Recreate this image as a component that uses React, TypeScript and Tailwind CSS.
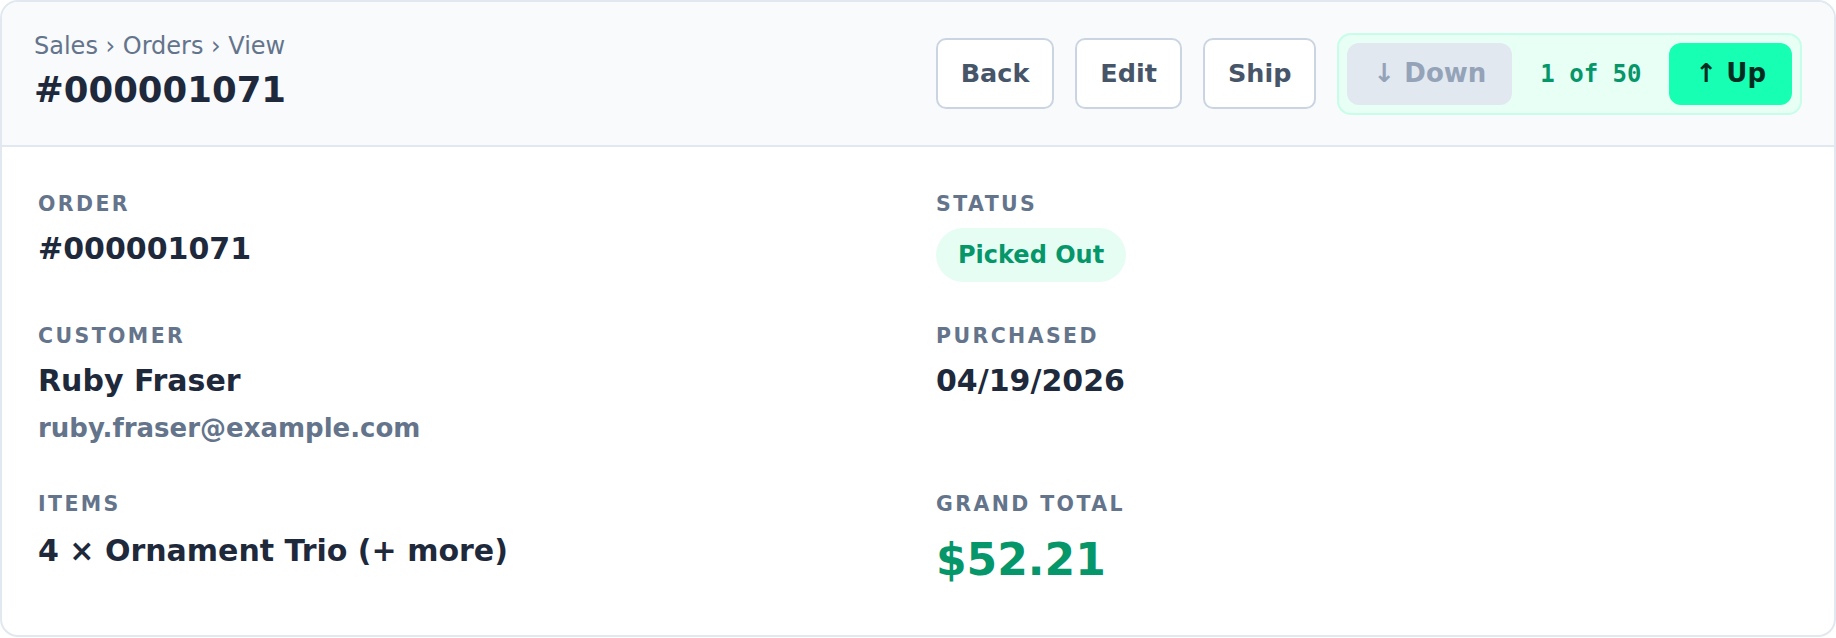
const sans = "font-['DejaVu_Sans',sans-serif]";

const Label = ({ children }: { children: string }) => (
  <div className="text-[20.5px] leading-[22px] font-bold uppercase tracking-[2.4px] text-[#64748b]">
    {children}
  </div>
);

const App = () => {
  return (
    <div className={`${sans} bg-white`}>
      <div className="h-[637px] rounded-[18px] border-2 border-[#e2e8f0] bg-white overflow-hidden">
        {/* header */}
        <header className="flex h-[145px] items-center justify-between border-b-2 border-[#e2e8f0] bg-[#f8fafc] px-[32px]">
          <div className="flex flex-col gap-[14px] pb-[6px]">
            <div className="text-[24px] leading-none text-[#64748b]">
              Sales › Orders › View
            </div>
            <h1 className="text-[35.5px] leading-none font-bold text-[#1e293b]">
              #000001071
            </h1>
          </div>

          <div className="flex items-center gap-[21px]">
            <button className="h-[71px] rounded-[10px] border-2 border-[#cbd5e1] bg-white px-[23px] text-[25.5px] font-bold text-[#475569]">
              Back
            </button>
            <button className="h-[71px] rounded-[10px] border-2 border-[#cbd5e1] bg-white px-[23px] text-[25.5px] font-bold text-[#475569]">
              Edit
            </button>
            <button className="h-[71px] rounded-[10px] border-2 border-[#cbd5e1] bg-white px-[23px] text-[25.5px] font-bold text-[#475569]">
              Ship
            </button>

            <div className="flex items-center gap-[28px] rounded-[14px] border-2 border-[#c8fde9] bg-[#e8fff6] p-[8px]">
              <button
                disabled
                className="h-[62px] rounded-[12px] bg-[#e2e8f0] px-[26px] text-[26px] font-bold text-[#94a3b8]"
              >
                ↓ Down
              </button>
              <span className="font-['DejaVu_Sans_Mono',monospace] text-[24px] font-bold text-[#059669]">
                1 of 50
              </span>
              <button className="h-[62px] rounded-[12px] bg-[#16ffb3] px-[26px] text-[26px] font-bold text-[#022c22]">
                ↑ Up
              </button>
            </div>
          </div>
        </header>

        {/* details */}
        <div className="grid grid-cols-2 gap-x-[36px] gap-y-[43px] px-[36px] pt-[46px]">
          <div className="flex flex-col gap-[14px]">
            <Label>Order</Label>
            <div className="text-[30px] leading-[40px] font-bold text-[#1e293b]">
              #000001071
            </div>
          </div>
          <div className="flex flex-col items-start gap-[13px]">
            <Label>Status</Label>
            <span className="flex h-[54px] items-center rounded-full bg-[#e6fdf4] px-[22px] text-[24px] font-bold text-[#059669]">
              Picked Out
            </span>
          </div>

          <div className="flex flex-col gap-[14px]">
            <Label>Customer</Label>
            <div>
              <div className="text-[30px] leading-[40px] font-bold text-[#1e293b]">
                Ruby Fraser
              </div>
              <div className="mt-[6px] text-[26px] leading-[43px] font-bold text-[#64748b]">
                ruby.fraser@example.com
              </div>
            </div>
          </div>
          <div className="flex flex-col gap-[14px]">
            <Label>Purchased</Label>
            <div className="text-[30px] leading-[40px] font-bold text-[#1e293b]">
              04/19/2026
            </div>
          </div>

          <div className="flex flex-col gap-[16px]">
            <Label>Items</Label>
            <div className="text-[30px] leading-[40px] font-bold text-[#1e293b]">
              4 × Ornament Trio (+ more)
            </div>
          </div>
          <div className="flex flex-col gap-[20px]">
            <Label>Grand Total</Label>
            <div className="text-[44px] leading-[50px] font-bold text-[#059669]">
              $52.21
            </div>
          </div>
        </div>
      </div>
    </div>
  );
};

export default App;
